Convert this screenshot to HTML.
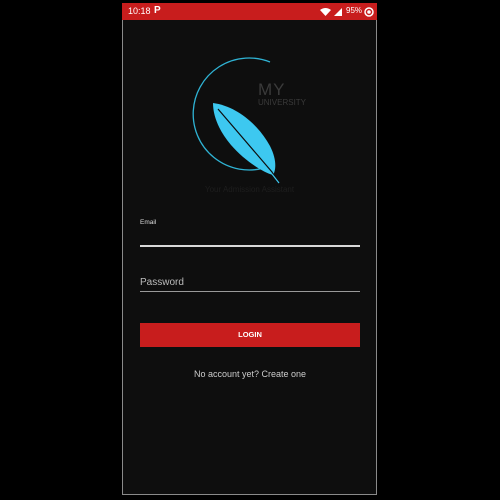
<!DOCTYPE html>
<html><head><meta charset="utf-8"><style>
html,body{margin:0;padding:0;background:#000;width:500px;height:500px;overflow:hidden;font-family:"Liberation Sans",sans-serif}
.frame{position:absolute;left:122px;top:3px;width:255px;height:492px;background:#0e0e0e;border:1px solid #8a8a8a;border-top:none;box-sizing:border-box}
.sb{position:absolute;left:122px;top:3px;width:255px;height:17px;background:#c81d1d;color:#fff;font-size:9px}
.abs{position:absolute}
</style></head><body>
<div class="frame"></div>
<div class="sb">
<span class="abs" style="left:6px;top:3px">10:18</span>
<span class="abs" style="left:32px;top:2px;font-weight:bold;font-size:10px">P</span>
<svg class="abs" style="left:198px;top:4px" width="24" height="10"><path d="M0 3 Q5.5 -1 11 3 L5.5 9Z" fill="#fff"/><path d="M14 9 L22 1 L22 9Z" fill="#fff"/></svg>
<span class="abs" style="left:224px;top:3px;font-size:8px">95%</span>
<svg class="abs" style="left:242px;top:4px" width="10" height="10"><circle cx="5" cy="5" r="4" fill="none" stroke="#fff" stroke-width="1.5"/><circle cx="5" cy="5" r="1.8" fill="#fff"/></svg>
</div>
<svg class="abs" style="left:0;top:0" width="500" height="500">
<path d="M270 62 A56 56 0 1 0 264 168" fill="none" stroke="#2fb3d4" stroke-width="1.3"/>
<path d="M213 103 C236 106 258 124 270 146 C277 160 276 170 273 175 C262 172 244 160 231 145 C219 131 213 116 213 103Z" fill="#3dc8f0"/>
<path d="M218 109 L272 172 L278 182" fill="none" stroke="#0e0e0e" stroke-width="1.2"/>
<path d="M272 174 L279 183" stroke="#3dc8f0" stroke-width="1.2"/>
</svg>
<div class="abs" style="left:258px;top:80px;font-size:17px;color:#3a3a3a;letter-spacing:1px">MY</div>
<div class="abs" style="left:258px;top:98px;font-size:8px;color:#3a3a3a">UNIVERSITY</div>
<div class="abs" style="left:205px;top:185px;font-size:8px;color:#1e1e1e">Your Admission Assistant</div>
<div class="abs" style="left:140px;top:219px;font-size:6.5px;color:#ddd">Email</div>
<div class="abs" style="left:140px;top:245px;width:220px;height:2px;background:#d8d8d8"></div>
<div class="abs" style="left:140px;top:277px;font-size:10px;color:#bbb">Password</div>
<div class="abs" style="left:140px;top:291px;width:220px;height:1px;background:#999"></div>
<div class="abs" style="left:140px;top:323px;width:220px;height:24px;background:#c81d1d;color:#fff;font-size:7.5px;font-weight:bold;text-align:center;line-height:24px">LOGIN</div>
<div class="abs" style="left:140px;top:369px;width:220px;text-align:center;font-size:9px;color:#ccc">No account yet? Create one</div>
</body></html>
